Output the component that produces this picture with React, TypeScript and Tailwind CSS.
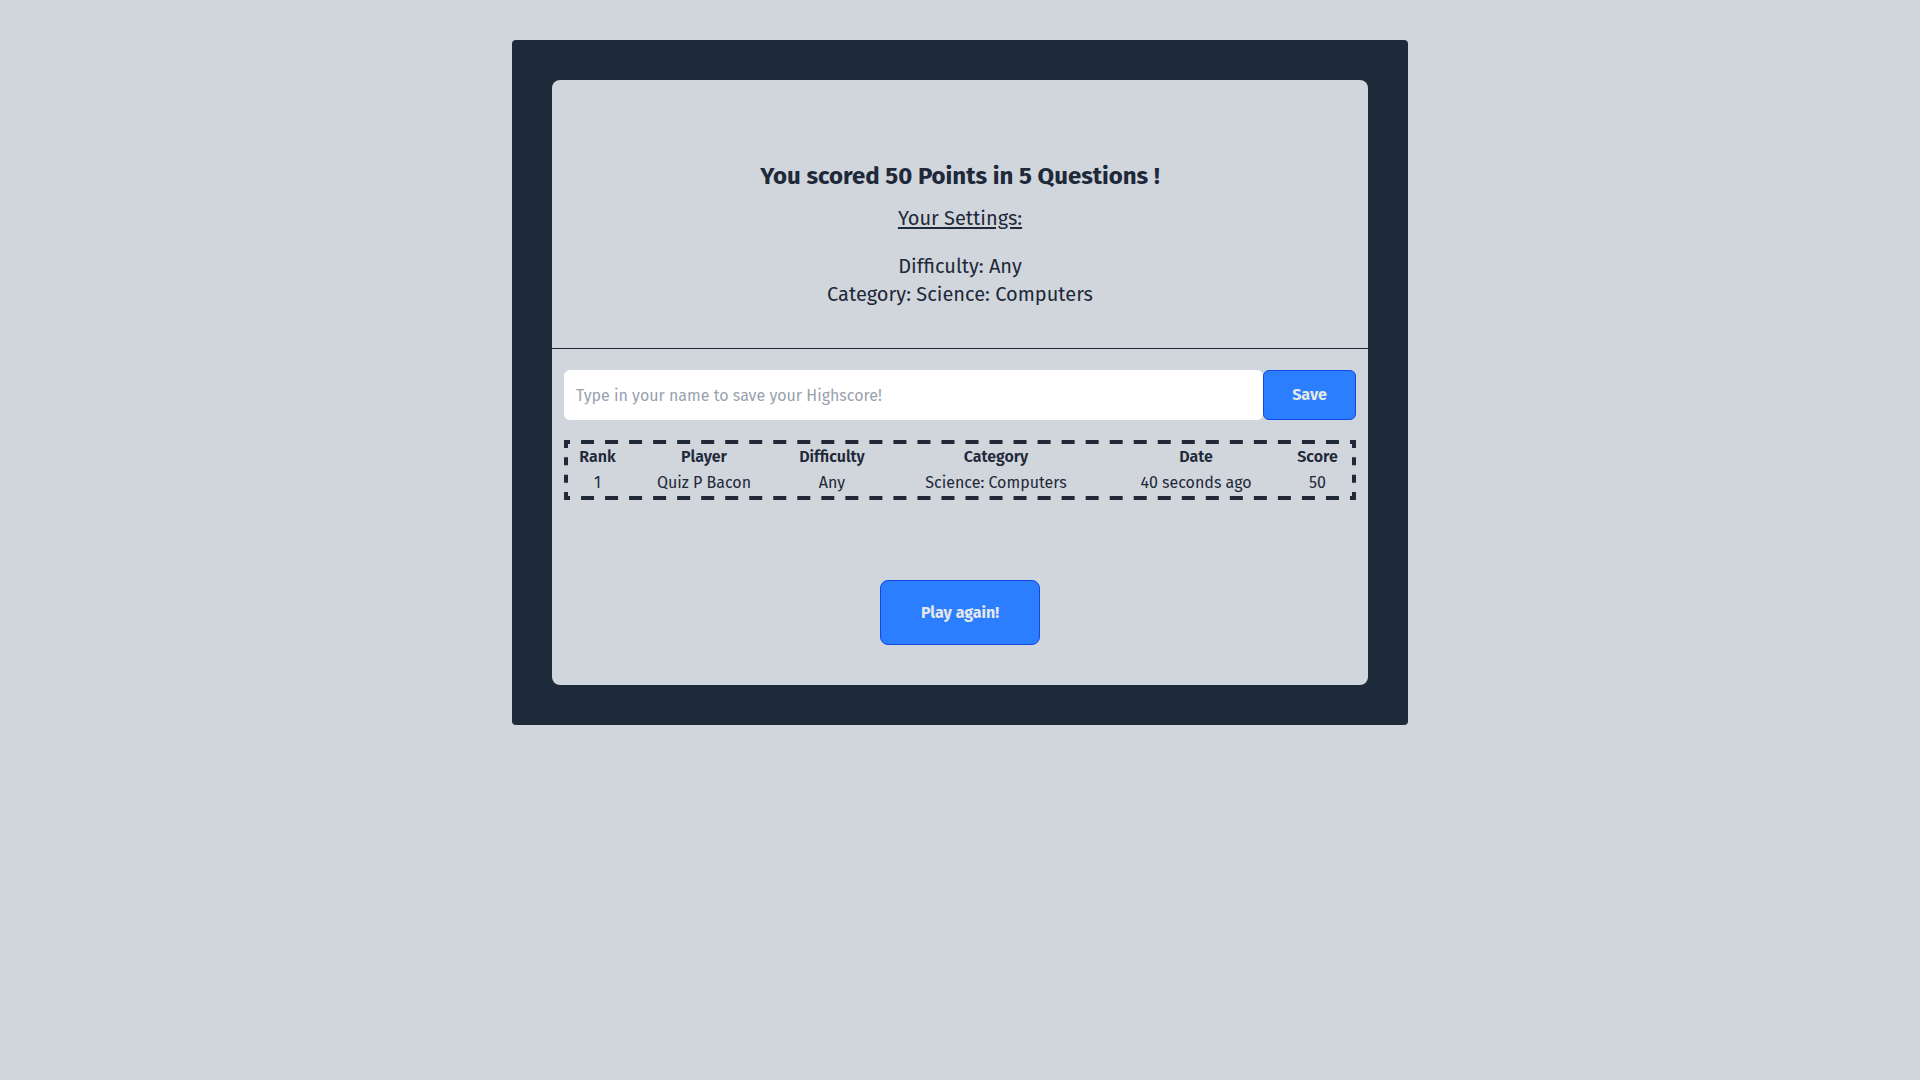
const rows = [
  {
    rank: 1,
    player: "Quiz P Bacon",
    difficulty: "Any",
    category: "Science: Computers",
    date: "40 seconds ago",
    score: 50,
  },
];

const cols = ["w-[59px]", "w-[154px]", "w-[102px]", "w-[226px]", "w-[174px]", "w-[69px]"];

// frame is 792 x 60, dashes laid out like the browser's dashed border
const FW = 792;
const FH = 60;
const hDash = ["6", ...Array.from({ length: 32 }, () => "11.03 13"), "11.03 6"].join(" ");
const vDash = "8 9.33 8 9.33 8 9.33 8";

function DashedFrame() {
  return (
    <svg
      className="pointer-events-none absolute inset-0"
      width={FW}
      height={FH}
      viewBox={`0 0 ${FW} ${FH}`}
      aria-hidden="true"
    >
      <g stroke="#1f2937" strokeWidth="4" fill="none">
        <line x1="0" y1="2" x2={FW} y2="2" strokeDasharray={hDash} />
        <line x1="0" y1={FH - 2} x2={FW} y2={FH - 2} strokeDasharray={hDash} />
        <line x1="2" y1="0" x2="2" y2={FH} strokeDasharray={vDash} />
        <line x1={FW - 2} y1="0" x2={FW - 2} y2={FH} strokeDasharray={vDash} />
      </g>
    </svg>
  );
}

export default function App() {
  return (
    <div className="min-h-screen bg-gray-300 pt-10 font-['Fira_Sans','Lato','Open_Sans',sans-serif] text-gray-800">
      <div className="mx-auto w-[896px] rounded bg-gray-800 p-10">
        <div className="rounded-lg bg-gray-300">
          <div className="flex flex-col items-center pt-20 pb-10">
            <h1 className="text-2xl font-bold">You scored 50 Points in 5 Questions !</h1>
            <h2 className="mt-3 text-xl underline underline-offset-2">Your Settings:</h2>
            <div className="mt-5 text-center text-xl">
              <p>Difficulty: Any</p>
              <p>Category: Science: Computers</p>
            </div>
          </div>

          <div className="border-t border-gray-800 px-3 pt-[21px] pb-10">
            <form className="flex h-[50px]" onSubmit={(e) => e.preventDefault()}>
              <input
                type="text"
                placeholder="Type in your name to save your Highscore!"
                className="h-full flex-1 rounded-md bg-white px-3 text-base placeholder:text-gray-400 focus:outline-none"
              />
              <button
                type="submit"
                className="h-full w-[93px] rounded-md border border-blue-700 bg-blue-500 text-base font-bold text-gray-200"
              >
                Save
              </button>
            </form>

            <div className="relative mt-5 h-[60px] p-1">
              <DashedFrame />
              <table className="w-full table-fixed text-center text-base">
                <thead>
                  <tr className="h-[26px]">
                    {["Rank", "Player", "Difficulty", "Category", "Date", "Score"].map((h, i) => (
                      <th key={h} className={`${cols[i]} font-semibold`}>
                        {h}
                      </th>
                    ))}
                  </tr>
                </thead>
                <tbody>
                  {rows.map((r) => (
                    <tr key={r.rank} className="h-[26px]">
                      <td>{r.rank}</td>
                      <td>{r.player}</td>
                      <td>{r.difficulty}</td>
                      <td>{r.category}</td>
                      <td>{r.date}</td>
                      <td>{r.score}</td>
                    </tr>
                  ))}
                </tbody>
              </table>
            </div>

            <div className="mt-20 flex justify-center">
              <button className="h-[65px] w-[160px] rounded-lg border border-blue-700 bg-blue-500 text-base font-bold text-gray-200">
                Play again!
              </button>
            </div>
          </div>
        </div>
      </div>
    </div>
  );
}
